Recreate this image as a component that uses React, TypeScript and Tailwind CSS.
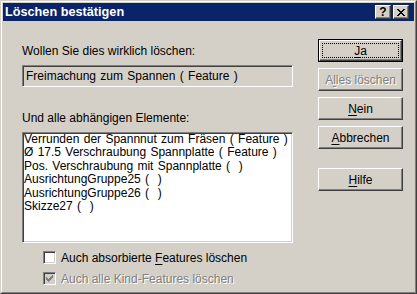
import React from "react";

const raised =
  "border border-t-white border-l-white border-r-[#404040] border-b-[#404040] shadow-[inset_-1px_-1px_#808080]";
const sunken =
  "border border-t-[#808080] border-l-[#808080] border-r-white border-b-white shadow-[inset_1px_1px_#404040,inset_-1px_-1px_#d4d0c8]";

const items = [
  "Verrunden der Spannnut zum Fräsen ( Feature )",
  "Ø 17.5 Verschraubung Spannplatte ( Feature )",
  "Pos. Verschraubung mit Spannplatte (  )",
  "AusrichtungGruppe25 (  )",
  "AusrichtungGruppe26 (  )",
  "Skizze27 (  )",
];

const CloseGlyph = () => (
  <svg width="8" height="7" viewBox="0 0 8 7" shapeRendering="crispEdges">
    <path
      fill="#000"
      d="M0 0h2v1H0zM6 0h2v1H6zM1 1h2v1H1zM5 1h2v1H5zM2 2h4v1H2zM3 3h2v1H3zM2 4h4v1H2zM1 5h2v1H1zM5 5h2v1H5zM0 6h2v1H0zM6 6h2v1H6z"
    />
  </svg>
);

const CheckGlyph = () => (
  <svg width="7" height="7" viewBox="0 0 7 7" shapeRendering="crispEdges">
    <path
      fill="#808080"
      d="M6 0h1v1H6zM5 1h2v1H5zM0 2h1v1H0zM4 2h3v1H4zM0 3h2v1H0zM3 3h3v1H3zM0 4h5v1H0zM1 5h3v1H1zM2 6h1v1H2z"
    />
  </svg>
);

const Btn = ({ children, disabled, isDefault, className = "" }: any) => {
  const label = (
    <span
      className={
        disabled
          ? "text-[#808080] [text-shadow:1px_1px_0_#fff]"
          : "text-black"
      }
    >
      {children}
    </span>
  );
  if (isDefault) {
    return (
      <div className={"h-[23px] w-[85px] border border-black " + className}>
        <div className={"relative h-full w-full flex items-center justify-center " + raised}>
          <div className="absolute inset-[2px] border border-dotted border-black" />
          {label}
        </div>
      </div>
    );
  }
  return (
    <div className={"h-[23px] w-[85px] flex items-center justify-center " + raised + " " + className}>
      {label}
    </div>
  );
};

export default function App() {
  return (
    <div className="w-[417px] h-[294px] bg-[#d4d0c8] border border-t-[#d4d0c8] border-l-[#d4d0c8] border-r-[#404040] border-b-[#404040] font-['Liberation_Sans',Arial,sans-serif] text-[12px] leading-[14px] text-black select-none">
      <div className="h-full border border-t-white border-l-white border-r-[#808080] border-b-[#808080] p-px flex flex-col">
        {/* title bar */}
        <div className="h-[18px] bg-[#0a246a] flex items-center pl-[2px] pr-[5px]">
          <span className="text-white font-bold text-[12.7px] leading-[18px] flex-1">
            Löschen bestätigen
          </span>
          <div className="flex gap-[2px]">
            <div className={"w-4 h-[14px] bg-[#d4d0c8] flex items-center justify-center " + raised}>
              <span className="font-bold text-[12px] leading-[12px] text-black">?</span>
            </div>
            <div className={"w-4 h-[14px] bg-[#d4d0c8] flex items-center justify-center " + raised}>
              <CloseGlyph />
            </div>
          </div>
        </div>

        {/* body */}
        <div className="flex-1 flex">
          <div className="pl-[19px] w-[290px] flex flex-col">
            <div className="mt-[23px]">Wollen Sie dies wirklich löschen:</div>
            <div className={"mt-[7px] h-[22px] w-[271px] bg-[#d4d0c8] flex items-center pl-[3px] pb-px [word-spacing:1px] " + sunken}>
              Freimachung zum Spannen ( Feature )
            </div>
            <div className="mt-[24px]">Und alle abhängigen Elemente:</div>
            <div className={"mt-[7px] h-[111px] w-[271px] bg-white pl-px overflow-hidden [word-spacing:1px] " + sunken}>
              {items.map((t, i) => (
                <div key={i} className="leading-[13.4px] whitespace-pre">
                  {t}
                </div>
              ))}
            </div>
            <div className="mt-[8px] ml-[21px] flex flex-col gap-[8px]">
              <div className="h-[13px] flex items-center gap-[5px]">
                <div className={"w-[13px] h-[13px] bg-white " + sunken} />
                <span>
                  Auch absorbierte <span className="underline underline-offset-2">F</span>eatures löschen
                </span>
              </div>
              <div className="h-[13px] flex items-center gap-[5px]">
                <div className={"w-[13px] h-[13px] bg-[#d4d0c8] flex items-center justify-center " + sunken}>
                  <CheckGlyph />
                </div>
                <span className="text-[#808080] [text-shadow:1px_1px_0_#fff]">
                  Auch alle Kind-Features löschen
                </span>
              </div>
            </div>
          </div>

          <div className="ml-[25px] pt-[18px] flex flex-col gap-[6px]">
            <Btn isDefault>
              <span className="underline underline-offset-2">J</span>a
            </Btn>
            <Btn disabled>
              A<span className="underline underline-offset-2">l</span>les löschen
            </Btn>
            <Btn>
              <span className="underline underline-offset-2">N</span>ein
            </Btn>
            <Btn>
              <span className="underline underline-offset-2">A</span>bbrechen
            </Btn>
            <Btn className="mt-[13px]">
              <span className="underline underline-offset-2">H</span>ilfe
            </Btn>
          </div>
        </div>
      </div>
    </div>
  );
}
